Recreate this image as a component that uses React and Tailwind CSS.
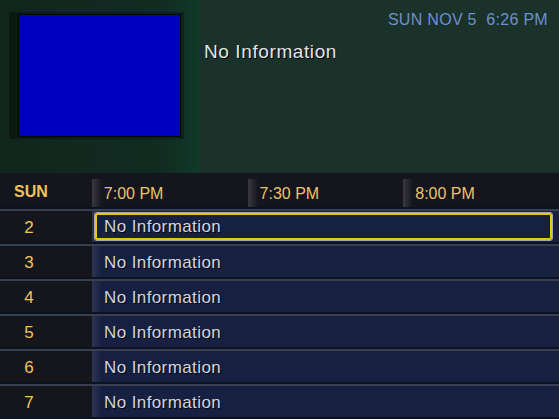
import React from 'react';

// Guide rows shown under the preview area
const CHANNELS = [2, 3, 4, 5, 6, 7];
const SLOTS = ['7:00 PM', '7:30 PM', '8:00 PM'];

const ProgramRow = ({ channel, selected }) => (
  <div className="flex flex-col">
    <div className="h-[2px] bg-[#393f50]" />
    <div className="flex h-[31px]">
      <div className="w-[92px] bg-[#15151c] flex items-center pt-[2px]">
        <span className="w-[58px] text-center text-[17px] text-[#f0c45c]">{channel}</span>
      </div>
      <div className="flex-1 flex bg-[#172040]">
        <div className="w-[10px] bg-gradient-to-r from-[#2c3552] to-[#172040]" />
        {selected ? (
          <div className="flex-1 -ml-[8px] mr-[3px] my-[1px] rounded-[3px] border border-[#a8a8b0] flex">
            <div className="flex-1 rounded-[2px] border-[2px] border-[#ecc40a] flex items-center pl-[7px] pt-[1px] bg-[#162040]">
              <span className="text-[17px] tracking-[0.4px] text-[#d4d4dc] [text-shadow:1px_1px_0_#05080f]">No Information</span>
            </div>
          </div>
        ) : (
          <div className="flex-1 flex items-center pl-[2px] pt-[2px] mr-[3px]">
            <span className="text-[17px] tracking-[0.4px] text-[#d4d4dc] [text-shadow:1px_1px_0_#05080f]">No Information</span>
          </div>
        )}
        <div className="w-[3px] bg-[#1a2238]" />
      </div>
    </div>
    <div className="h-[2px] bg-[#0b1220]" />
  </div>
);

export default function App() {
  return (
    <div className="w-[559px] h-[419px] overflow-hidden bg-[#0b1220] font-['Liberation_Sans',Arial,sans-serif]">
      {/* Preview + info */}
      <div className="h-[173px] flex">
        <div className="w-[200px] bg-gradient-to-r from-[#11261d] via-[#112b21] via-80% to-[#0f3a2a] pt-[12px]">
          <div className="w-[175px] ml-[9px] pl-[9px] pr-[2px] py-[2px] bg-gradient-to-r from-[#0a1a12] to-[#0d2219]">
            <div className="w-[163px] h-[123px] bg-[#0000c0] border border-[#02060a]" />
          </div>
        </div>
        <div className="flex-1 bg-[#1a322a] relative">
          <div className="absolute right-[11px] top-[8px] text-[16px] text-[#6e90cc] whitespace-pre tracking-[0.3px]">
            SUN NOV 5  6:26 PM
          </div>
          <div className="pl-[4px] pt-[38px] text-[19px] tracking-[0.6px] text-[#e4e4e4] [text-shadow:1px_1px_0_#000]">No Information</div>
        </div>
      </div>

      {/* Time header */}
      <div className="h-[34px] flex bg-[#15151d]">
        <div className="w-[92px] flex items-center pt-[4px]">
          <span className="w-[62px] text-center text-[16px] font-bold text-[#efc35a]">SUN</span>
        </div>
        {SLOTS.map((slot) => (
          <div key={slot} className="w-[156px] flex pt-[6px]">
            <div className="w-[10px] bg-gradient-to-r from-[#3a3a3e] to-[#15151d]" />
            <span className="pl-[2px] pt-[3px] text-[16px] text-[#e9c46c]">{slot}</span>
          </div>
        ))}
      </div>
      <div className="h-[2px] bg-[#0b1220]" />

      {CHANNELS.map((ch, i) => (
        <ProgramRow key={ch} channel={ch} selected={i === 0} />
      ))}
    </div>
  );
}
